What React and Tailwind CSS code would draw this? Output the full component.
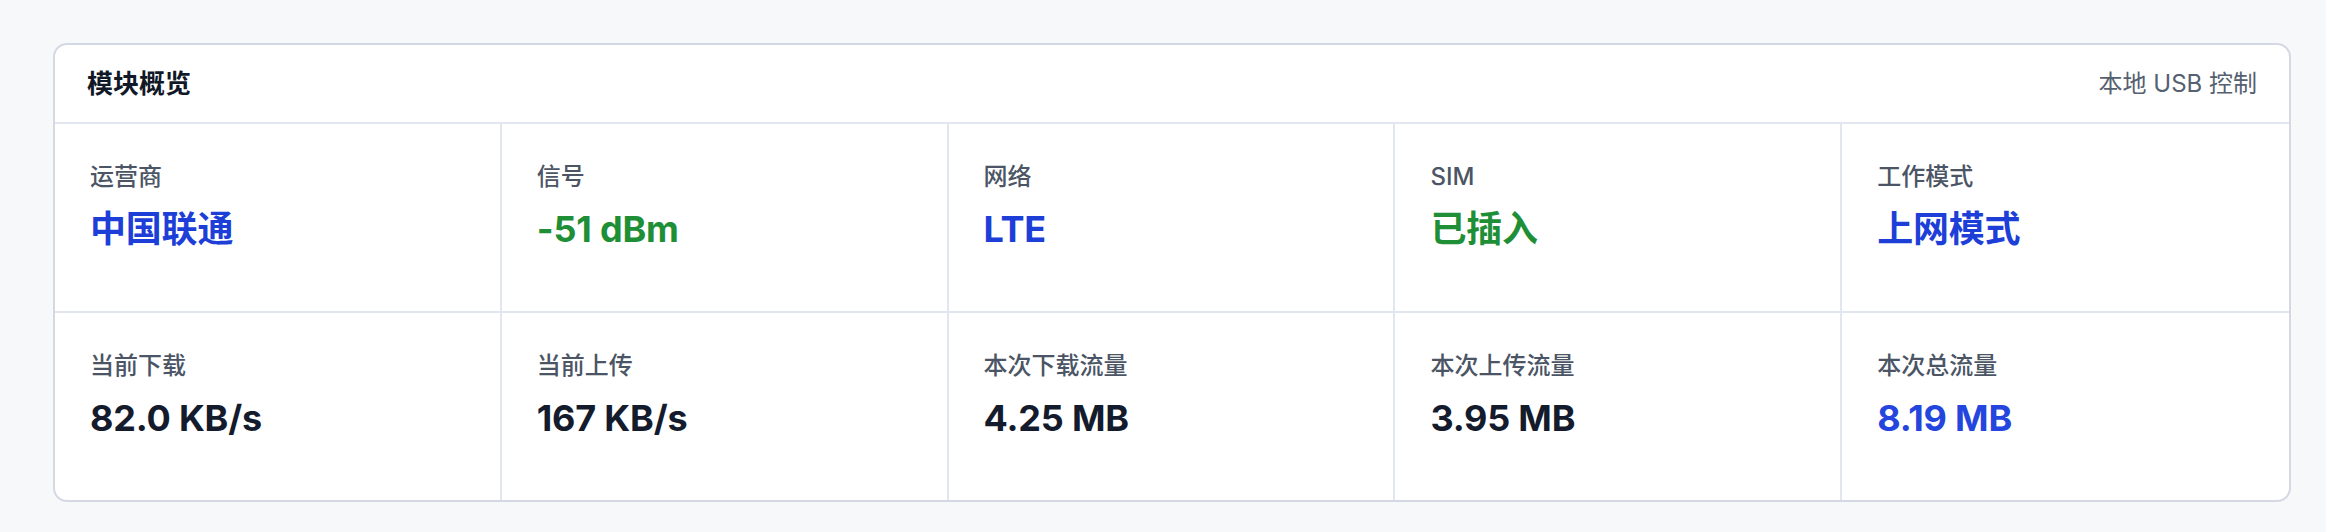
import React from "react";

const rows = [
  [
    { label: "运营商", value: "中国联通", color: "text-[#1d3fd8]" },
    { label: "信号", value: "-51 dBm", color: "text-[#1f8f37]" },
    { label: "网络", value: "LTE", color: "text-[#1d3fd8]" },
    { label: "SIM", value: "已插入", color: "text-[#1f8f37]" },
    { label: "工作模式", value: "上网模式", color: "text-[#1d3fd8]" },
  ],
  [
    { label: "当前下载", value: "82.0 KB/s", color: "text-[#141b2d]" },
    { label: "当前上传", value: "167 KB/s", color: "text-[#141b2d]" },
    { label: "本次下载流量", value: "4.25 MB", color: "text-[#141b2d]" },
    { label: "本次上传流量", value: "3.95 MB", color: "text-[#141b2d]" },
    { label: "本次总流量", value: "8.19 MB", color: "text-[#2445de]" },
  ],
];

export default function App() {
  return (
    <div className="min-h-[532px] bg-[#f7f8fa] pt-[43px] pl-[53px] pr-[35px] font-['Inter','Noto_Sans_CJK_SC',sans-serif]">
      <div className="rounded-[14px] border-2 border-[#d3d8e3] bg-white overflow-hidden">
        <div className="h-[79px] px-[32px] flex items-center justify-between border-b-2 border-[#e2e6ee]">
          <div className="text-[26px] font-bold text-[#111827] leading-[32px]">模块概览</div>
          <div className="text-[24px] text-[#556070] leading-[32px]">本地 USB 控制</div>
        </div>
        {rows.map((row, ri) => (
          <div
            key={ri}
            className={
              ri === 0
                ? "grid grid-cols-5 border-b-2 border-[#e2e6ee]"
                : "grid grid-cols-5"
            }
          >
            {row.map((c, ci) => (
              <div
                key={ci}
                className={
                  ci < 4
                    ? "h-[187px] pl-[35px] pt-[37px] border-r-2 border-[#e2e6ee]"
                    : "h-[187px] pl-[35px] pt-[37px]"
                }
              >
                <div className="text-[24px] leading-[32px] font-medium text-[#4b5565]">
                  {c.label}
                </div>
                <div
                  className={
                    "mt-[12px] text-[36px] leading-[48px] font-bold tracking-[-0.2px] " +
                    c.color
                  }
                >
                  {c.value}
                </div>
              </div>
            ))}
          </div>
        ))}
      </div>
    </div>
  );
}
